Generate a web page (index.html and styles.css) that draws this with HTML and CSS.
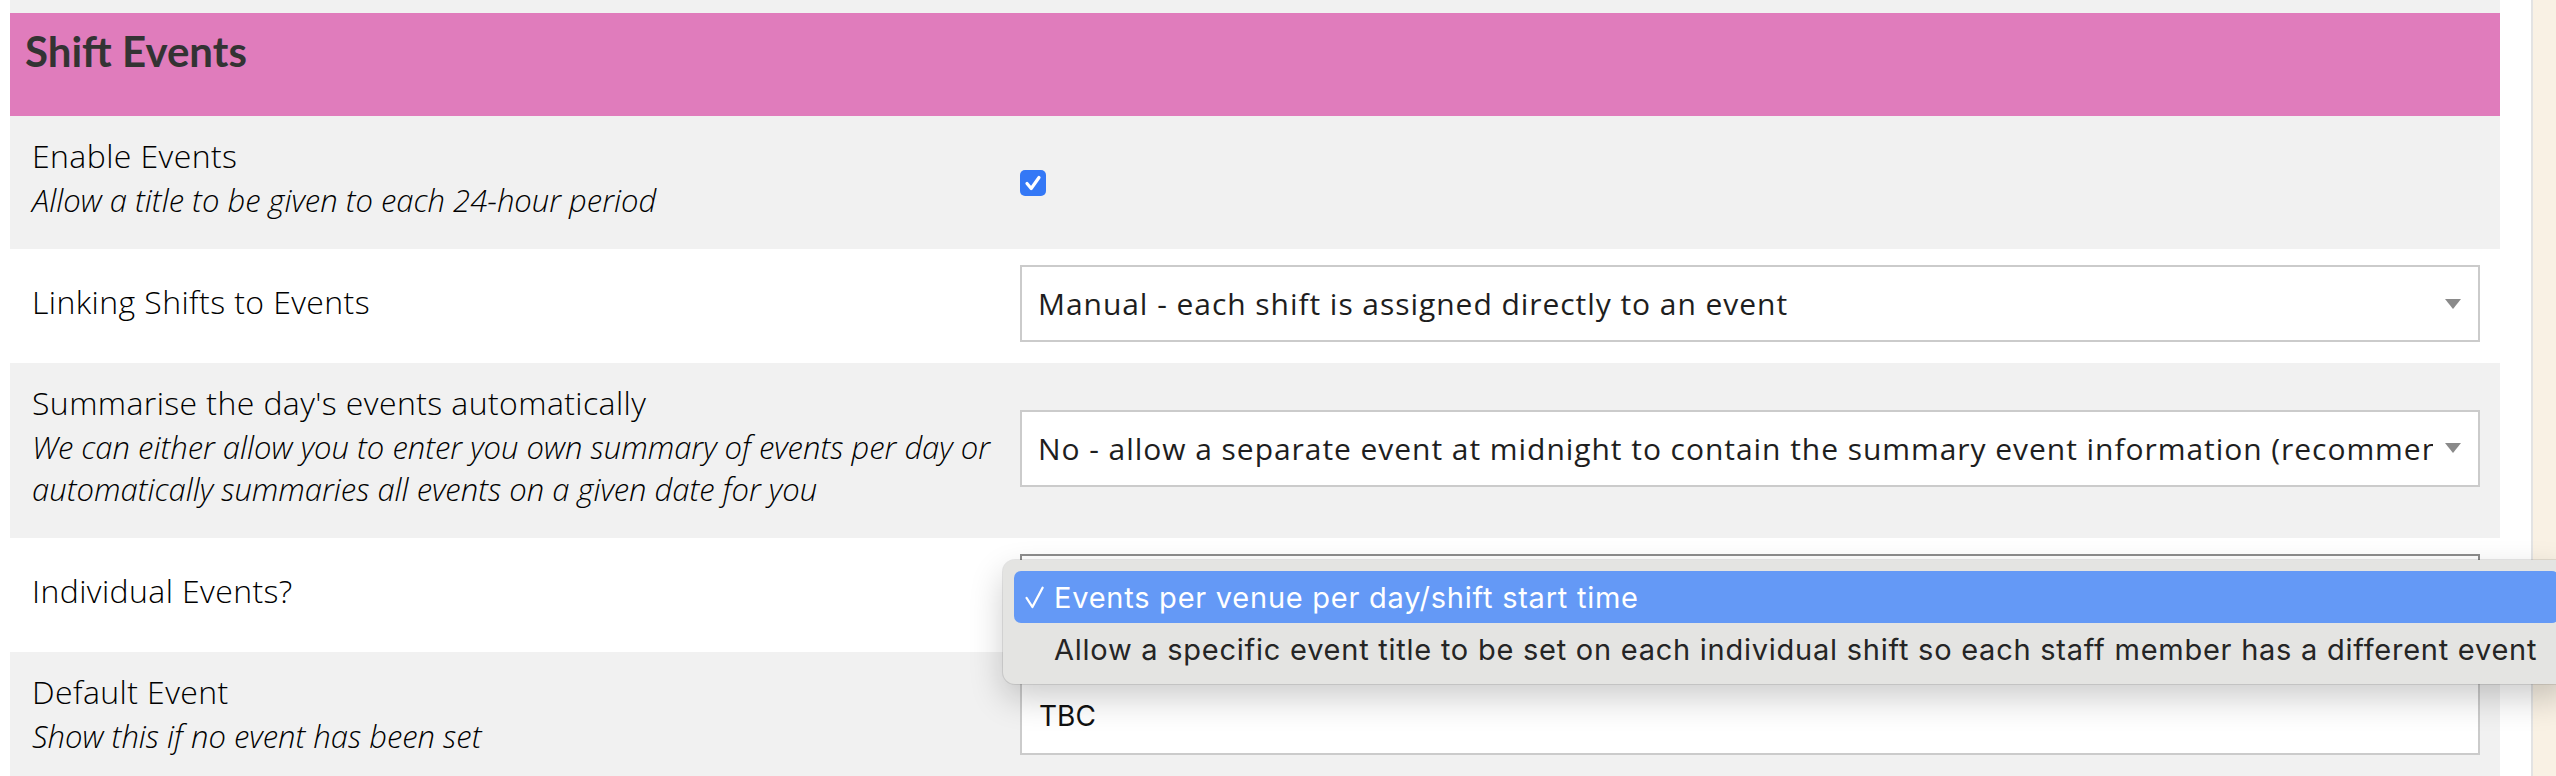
FILE: index.html
```html
<!DOCTYPE html>
<html lang="en">
<head>
<meta charset="utf-8">
<title>Shift Events</title>
<link rel="stylesheet" href="styles.css">
</head>
<body>
<div class="page">
  <main class="content">
    <div class="prev"></div>
    <section class="panel">
      <h2 class="panel-title">Shift Events</h2>

      <div class="row alt">
        <div class="label">
          <div class="title">Enable Events</div>
          <div class="desc">Allow a title to be given to each 24-hour period</div>
        </div>
        <div class="control">
          <span class="checkbox"><svg viewBox="0 0 26 26" width="26" height="26"><path d="M7 13.5 L11.2 18.5 L19 7.5" fill="none" stroke="#fff" stroke-width="3.2" stroke-linecap="round" stroke-linejoin="round"/></svg></span>
        </div>
      </div>

      <div class="row">
        <div class="label">
          <div class="title">Linking Shifts to Events</div>
        </div>
        <div class="control">
          <div class="select">
            <span class="select-text">Manual - each shift is assigned directly to an event</span>
            <svg class="arrow" viewBox="0 0 16 10"><path d="M0 0H16L8 10Z" fill="#8a8a8a"/></svg>
          </div>
        </div>
      </div>

      <div class="row alt">
        <div class="label">
          <div class="title">Summarise the day's events automatically</div>
          <div class="desc">We can either allow you to enter you own summary of events per day or<br>automatically summaries all events on a given date for you</div>
        </div>
        <div class="control">
          <div class="select">
            <span class="select-text">No - allow a separate event at midnight to contain the summary event information (recommended)</span>
            <svg class="arrow" viewBox="0 0 16 10"><path d="M0 0H16L8 10Z" fill="#8a8a8a"/></svg>
          </div>
        </div>
      </div>

      <div class="row">
        <div class="label">
          <div class="title">Individual Events?</div>
        </div>
        <div class="control">
          <div class="select focus">
            <span class="select-text under-menu">Events per venue per day/shift start time</span>
            <svg class="arrow" viewBox="0 0 16 10"><path d="M0 0H16L8 10Z" fill="#8a8a8a"/></svg>
          </div>
          <div class="menu">
            <div class="menu-item selected">
              <span class="check"><svg viewBox="0 0 19 23" width="19" height="23"><path d="M1.6 12 L7.4 21 L17.6 1.8" fill="none" stroke="#fff" stroke-width="2.3" stroke-linecap="round" stroke-linejoin="round"/></svg></span>
              <span>Events per venue per day/shift start time</span>
            </div>
            <div class="menu-item">
              <span class="check"></span>
              <span>Allow a specific event title to be set on each individual shift so each staff member has a different event</span>
            </div>
          </div>
        </div>
      </div>

      <div class="row alt">
        <div class="label">
          <div class="title">Default Event</div>
          <div class="desc">Show this if no event has been set</div>
        </div>
        <div class="control">
          <div class="input">TBC</div>
        </div>
      </div>
    </section>
  </main>
  <div class="gutter"></div>
  <aside class="side"></aside>
</div>
</body>
</html>
```

FILE: styles.css
```css
html, body {
  margin: 0;
  padding: 0;
  overflow: hidden;
  background: #fff;
}

body {
  font-family: "Open Sans", "Liberation Sans", sans-serif;
  color: #000;
}

.page {
  display: flex;
  min-height: 776px;
}

.content {
  width: 2500px;
  flex: none;
  padding-left: 10px;
  box-sizing: border-box;
}

.gutter {
  width: 31px;
  flex: none;
  background: #fff;
  border-right: 2px solid #e3e3e3;
}

.side {
  flex: 1;
  background: #f9f1e4;
}

.prev {
  height: 13px;
  background: #f1f1f1;
}

.panel-title {
  margin: 0;
  height: 103px;
  box-sizing: border-box;
  padding: 13px 15px 0;
  background: #e07cbc;
  color: #333;
  font-family: Lato, "Open Sans", sans-serif;
  font-weight: 700;
  font-size: 42px;
  line-height: 50px;
}

.row {
  display: grid;
  grid-template-columns: 988px minmax(0, 1fr);
  align-items: center;
  padding: 16px 20px 16px 22px;
  background: #fff;
}

.row.alt {
  background: #f1f1f1;
}

.label {
  padding: 3px 0 12px;
}

.title {
  font-size: 32px;
  line-height: 41px;
  font-weight: 300;
  letter-spacing: 0.4px;
}

.desc {
  margin-top: 3px;
  font-size: 31px;
  line-height: 42px;
  font-style: italic;
  font-weight: 300;
}

.control {
  position: relative;
  min-width: 0;
  display: flex;
  align-items: center;
}

.checkbox {
  width: 26px;
  height: 26px;
  border-radius: 5px;
  background: #3478f6;
  display: block;
}

.checkbox svg {
  display: block;
}

.select,
.input {
  width: 100%;
  min-width: 0;
  height: 77px;
  box-sizing: border-box;
  border: 2px solid #cbcbcb;
  background: #fff;
  display: flex;
  align-items: center;
  margin-bottom: 5px;
  color: #1e1e1e;
}

.select {
  padding: 0 17px 0 16px;
  font-size: 30px;
  letter-spacing: 0.95px;
}

.select.focus {
  border-color: #8d8d8d;
}

.select-text {
  flex: 1;
  min-width: 0;
  overflow: hidden;
  white-space: nowrap;
  margin-right: 12px;
}

.under-menu {
  visibility: hidden;
}

.arrow {
  width: 16px;
  height: 10px;
  flex: none;
}

.input {
  padding: 0 17px;
  font-family: Inter, "Liberation Sans", sans-serif;
  font-size: 28px;
  color: #111;
}

.menu {
  position: absolute;
  left: -17px;
  top: 6px;
  z-index: 5;
  padding: 11px 11px 9px;
  background: #e4e4e2;
  border-radius: 12px;
  box-shadow: 0 14px 34px rgba(0, 0, 0, 0.2), 0 0 0 1px rgba(0, 0, 0, 0.09);
  font-family: Inter, "Liberation Sans", sans-serif;
  font-size: 29px;
  letter-spacing: 0.75px;
  color: #252525;
  white-space: nowrap;
}

.menu-item {
  height: 52px;
  display: flex;
  align-items: center;
  padding: 0 22px 0 11px;
  border-radius: 7px;
}

.menu-item.selected {
  background: #6499f6;
  color: #fff;
}

.check {
  width: 29px;
  flex: none;
  display: flex;
  align-items: center;
}

.check svg {
  display: block;
}
```
